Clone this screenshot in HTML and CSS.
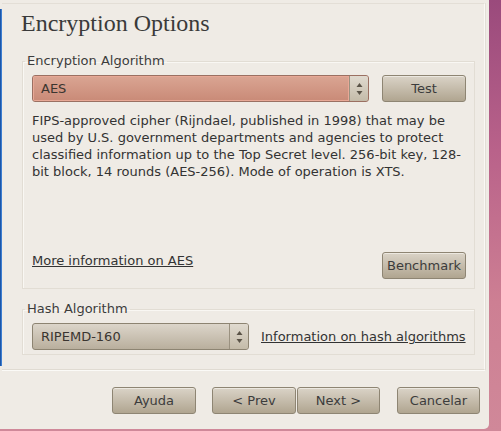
FILE: index.html
```html
<!DOCTYPE html>
<html>
<head>
<meta charset="utf-8">
<link rel="stylesheet" href="styles.css">
</head>
<body>
<div class="dialog">
  <div class="top">
    <div class="blue"></div>
    <div class="page">
      <h1 class="title">Encryption Options</h1>
      <fieldset class="group enc">
        <legend>Encryption Algorithm</legend>
        <div class="row">
          <div class="combo combo-aes">
            <span class="combo-text">AES</span>
            <span class="spin">
              <svg width="7" height="14" viewBox="0 0 7 14"><path d="M3.5 1 L6.5 5 H0.5 Z M3.5 13 L6.5 9 H0.5 Z" fill="#5a5347"/></svg>
            </span>
          </div>
          <button class="btn btn-test">Test</button>
        </div>
        <p class="desc">FIPS-approved cipher (Rijndael, published in 1998) that may be used by U.S. government departments and agencies to protect classified information up to the Top Secret level. 256-bit key, 128-bit block, 14 rounds (AES-256). Mode of operation is XTS.</p>
        <div class="row bottom-row">
          <a class="link">More information on AES</a>
          <button class="btn btn-bench">Benchmark</button>
        </div>
      </fieldset>
      <fieldset class="group hash">
        <legend>Hash Algorithm</legend>
        <div class="row hash-row">
          <div class="combo combo-hash">
            <span class="combo-text">RIPEMD-160</span>
            <span class="spin">
              <svg width="7" height="14" viewBox="0 0 7 14"><path d="M3.5 1 L6.5 5 H0.5 Z M3.5 13 L6.5 9 H0.5 Z" fill="#5a5347"/></svg>
            </span>
          </div>
          <a class="link">Information on hash algorithms</a>
        </div>
      </fieldset>
    </div>
  </div>
  <div class="actions">
    <button class="btn">Ayuda</button>
    <button class="btn btn-prev">&lt; Prev</button>
    <button class="btn btn-next">Next &gt;</button>
    <button class="btn btn-cancel">Cancelar</button>
  </div>
</div>
</body>
</html>
```
FILE: styles.css
```css
html, body {
  margin: 0;
  padding: 0;
}
body {
  width: 501px;
  height: 431px;
  overflow: hidden;
  background: linear-gradient(to bottom, #9a4a7c 0%, #b9628a 35%, #cd7f93 70%, #d08899 100%);
  font-family: "DejaVu Sans", sans-serif;
  font-size: 13px;
  color: #3c3c3c;
}
.dialog {
  width: 489px;
  height: 429px;
  background: #efebe5;
  border-bottom-right-radius: 5px;
  display: flex;
  flex-direction: column;
}
.top {
  display: flex;
  height: 370px;
}
.blue {
  width: 3px;
  margin-top: 9px;
  height: 357px;
  background: linear-gradient(to right, #1d56a8 0, #1d56a8 1px, #3c7dd0 1px);
}
.page {
  flex: 1;
  margin: 3px 4px 0 0;
  border-top: 1px solid #e3ded6;
  border-right: 1px solid #faf8f5;
  border-bottom: 1px solid #e0dbd2;
  box-shadow: 1px 0 0 #e3ded6, 0 1px 0 #fbfaf7;
  padding: 0 9px 0 20px;
  box-sizing: border-box;
}
.title {
  margin: 5px 0 0 -1px;
  font-family: "Liberation Serif", serif;
  font-weight: normal;
  font-size: 24px;
  line-height: 28px;
  color: #3a3a3a;
}
.group {
  margin: 0;
  border: 1px solid #e2ddd4;
  box-shadow: inset 1px 1px 0 #f9f7f3;
  padding: 0 8px 0 9px;
  min-width: 0;
}
.group legend {
  padding: 0 2px;
  margin-left: -7px;
  line-height: 16px;
  color: #3c3c3c;
}
.enc {
  margin-top: 16px;
  height: 236px;
  box-sizing: border-box;
}
.hash {
  margin-top: 12px;
  height: 54px;
  box-sizing: border-box;
}
.row {
  display: flex;
  align-items: center;
}
.enc .row:first-of-type {
  margin-top: 6px;
}
.combo {
  height: 27px;
  box-sizing: border-box;
  border-radius: 3px;
  display: flex;
  align-items: stretch;
  overflow: hidden;
}
.combo-aes {
  width: 337px;
  border: 1px solid #9b7062;
  background: linear-gradient(to bottom, #daa593, #c98a77);
}
.combo-aes .combo-text {
  box-shadow: inset 0 0 0 1px #e8a896;
}
.combo-hash {
  width: 217px;
  border: 1px solid #8d8472;
  background: linear-gradient(to bottom, #dcd5ca, #b9af9d);
}
.combo-text {
  flex: 1;
  padding-left: 8px;
  line-height: 25px;
  color: #3a3530;
}
.spin {
  width: 18px;
  border-left: 1px solid #9a9180;
  background: linear-gradient(to bottom, #e0dacf, #c4bba9);
  display: flex;
  align-items: center;
  justify-content: center;
}
.btn {
  font-family: "DejaVu Sans", sans-serif;
  font-size: 13px;
  color: #3c3c3c;
  height: 27px;
  width: 84px;
  padding: 0;
  border: 1px solid #8e8573;
  border-radius: 3px;
  background: linear-gradient(to bottom, #dad3c7, #b0a590);
  box-shadow: inset 0 1px 0 #ece8e0;
}
.btn-test {
  margin-left: 13px;
}
.desc {
  margin: 10px 0 0 0;
  line-height: 17px;
  width: 432px;
  height: 137px;
  color: #333;
}
.bottom-row {
  justify-content: space-between;
  margin-top: 3px;
}
.bottom-row .link {
  margin-top: -11px;
}
.link {
  color: #333;
  text-decoration: underline;
}
.hash-row {
  margin-top: 6px;
}
.hash-row .link {
  margin-left: 12px;
}
.actions {
  display: flex;
  margin-top: 17px;
  padding-left: 112px;
}
.btn-prev {
  margin-left: 16px;
}
.btn-next {
  margin-left: 1px;
  width: 83px;
}
.btn-cancel {
  margin-left: 17px;
  width: 83px;
}
```
